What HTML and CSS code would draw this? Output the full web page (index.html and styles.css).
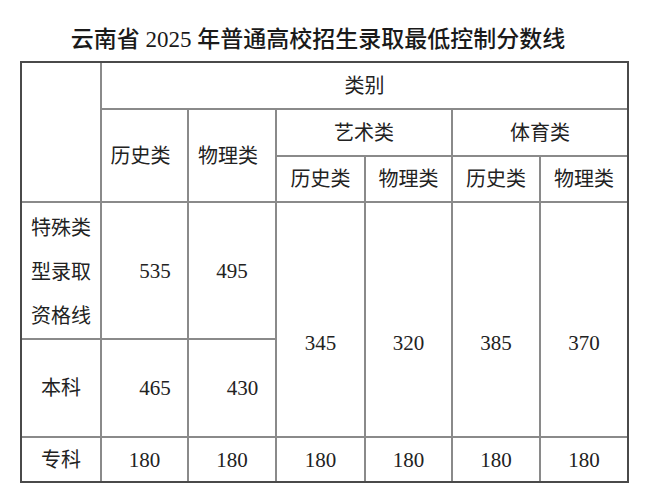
FILE: index.html
```html
<!DOCTYPE html>
<html lang="zh-CN">
<head>
<meta charset="utf-8">
<title>云南省2025年普通高校招生录取最低控制分数线</title>
<link rel="stylesheet" href="styles.css">
</head>
<body>
<h1 class="title">云南省 2025 年普通高校招生录取最低控制分数线</h1>
<div class="frame">
<table class="grid">
<colgroup>
<col class="c0"><col class="c1"><col class="c2"><col class="c3"><col class="c4"><col class="c5"><col class="c6">
</colgroup>
<tr class="r1"><td rowspan="3"></td><td colspan="6">类别</td></tr>
<tr class="r2"><td rowspan="2" class="hleft">历史类</td><td rowspan="2" class="hleft">物理类</td><td colspan="2">艺术类</td><td colspan="2">体育类</td></tr>
<tr class="r3"><td>历史类</td><td>物理类</td><td>历史类</td><td>物理类</td></tr>
<tr class="r4"><td class="multi">特殊类<br>型录取<br>资格线</td><td class="num shift">535</td><td class="num">495</td><td rowspan="2" class="num low">345</td><td rowspan="2" class="num low">320</td><td rowspan="2" class="num low">385</td><td rowspan="2" class="num low">370</td></tr>
<tr class="r5"><td>本科</td><td class="num shift">465</td><td class="num shift">430</td></tr>
<tr class="r6"><td>专科</td><td class="num">180</td><td class="num">180</td><td class="num">180</td><td class="num">180</td><td class="num">180</td><td class="num">180</td></tr>
</table>
</div>
</body>
</html>
```
FILE: styles.css
```css
html, body {
  margin: 0;
  padding: 0;
  background: #ffffff;
}
body {
  width: 652px;
  color: #222222;
  font-family: "Liberation Serif", "Noto Sans CJK SC", serif;
}
.title {
  margin: 0;
  padding: 19px 16px 0 0;
  height: 42px;
  line-height: 42px;
  font-size: 23px;
  font-weight: 500;
  text-align: center;
  color: #1a1a1a;
}
.frame {
  margin-left: 20px;
  width: 605px;
  border: 2px solid #4a4a4a;
}
.grid {
  width: 605px;
  table-layout: fixed;
  border-collapse: collapse;
  border-style: hidden;
  font-size: 20px;
}
.grid td {
  border: 2px solid #8a8a8a;
  padding: 0;
  text-align: center;
  vertical-align: middle;
  line-height: 26px;
}
.grid td.num { font-size: 21px; }
.c0 { width: 79px; }
.c1 { width: 87px; }
.c2 { width: 88px; }
.c3 { width: 89px; }
.c4 { width: 87px; }
.c5 { width: 88px; }
.c6 { width: 87px; }
.r1 { height: 46px; }
.r2 { height: 47px; }
.r3 { height: 46px; }
.r4 { height: 137px; }
.r5 { height: 98px; }
.r6 { height: 44px; }
.grid td.hleft { padding-right: 8px; }
.grid td.multi { line-height: 44px; padding-top: 2px; }
.grid td.shift { padding-left: 21px; }
.grid td.low { padding-top: 47px; }
```
